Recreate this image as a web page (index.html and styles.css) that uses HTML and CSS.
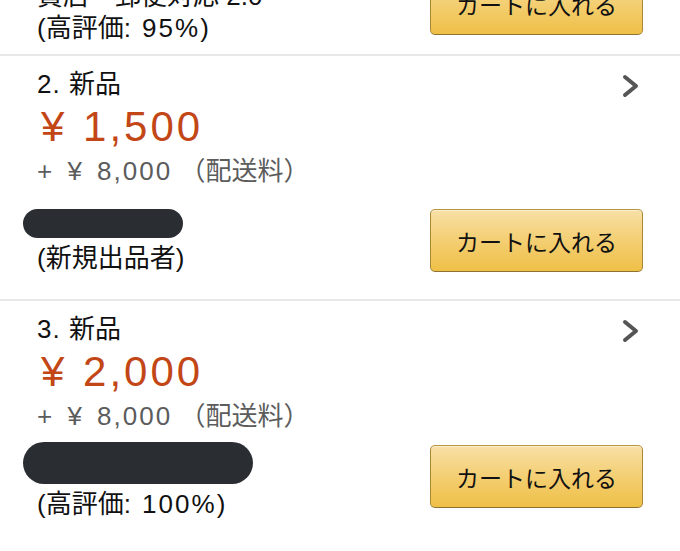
FILE: index.html
```html
<!DOCTYPE html>
<html lang="ja">
<head>
<meta charset="utf-8">
<title>出品一覧</title>
<link rel="stylesheet" href="styles.css">
</head>
<body>
<div class="list">
  <section class="offer offer-partial">
    <div class="seller">
      <div class="seller-line">貴店・郵便対応 2.0</div>
      <div class="seller-line">(高評価<span class="num">: 95%</span>)</div>
    </div>
    <button class="cart cart-partial" type="button">カートに入れる</button>
  </section>

  <section class="offer">
    <div class="offer-head">
      <div class="cond"><span class="idx">2. </span>新品</div>
      <svg class="chev" width="20" height="26" viewBox="0 0 20 26" aria-hidden="true"><path d="M4 4 L15 13 L4 22" fill="none" stroke="#555" stroke-width="4" stroke-linecap="round" stroke-linejoin="round"/></svg>
    </div>
    <div class="price"><span class="amt">¥ 1,500</span></div>
    <div class="ship"><span class="amt">+ ¥ 8,000</span> （配送料）</div>
    <div class="offer-foot foot-short">
      <div class="seller">
        <div class="redact redact-short"></div>
        <div class="seller-line">(新規出品者)</div>
      </div>
      <button class="cart" type="button">カートに入れる</button>
    </div>
  </section>

  <section class="offer">
    <div class="offer-head">
      <div class="cond"><span class="idx">3. </span>新品</div>
      <svg class="chev" width="20" height="26" viewBox="0 0 20 26" aria-hidden="true"><path d="M4 4 L15 13 L4 22" fill="none" stroke="#555" stroke-width="4" stroke-linecap="round" stroke-linejoin="round"/></svg>
    </div>
    <div class="price"><span class="amt">¥ 2,000</span></div>
    <div class="ship"><span class="amt">+ ¥ 8,000</span> （配送料）</div>
    <div class="offer-foot foot-tall">
      <div class="seller">
        <div class="redact redact-long"></div>
        <div class="seller-line">(高評価<span class="num">: 100%</span>)</div>
      </div>
      <button class="cart" type="button">カートに入れる</button>
    </div>
  </section>
</div>
</body>
</html>
```

FILE: styles.css
```css
html, body {
  margin: 0;
  padding: 0;
  background: #ffffff;
}

body {
  font-family: "Liberation Sans", "Noto Sans CJK JP", sans-serif;
  color: #111111;
  width: 680px;
  height: 551px;
  overflow: hidden;
}

.list {
  margin-top: -20px;
}

.offer {
  padding: 12px 37px 25px 37px;
  border-bottom: 2px solid #e8e8e8;
}

.offer:last-child {
  border-bottom: none;
}

.offer-partial {
  padding-top: 0;
  padding-bottom: 10px;
  display: flex;
  justify-content: space-between;
  align-items: flex-end;
}

.offer-head {
  display: flex;
  justify-content: space-between;
  align-items: flex-start;
}

.cond {
  font-size: 26px;
  line-height: 32px;
  color: #111111;
}

.idx {
  letter-spacing: 1px;
}

.chev {
  display: block;
  margin-top: 5px;
  margin-right: 2px;
}

.price {
  font-size: 42px;
  line-height: 54px;
  color: #c24616;
  padding-left: 4px;
}

.price .amt {
  letter-spacing: 3px;
  word-spacing: 1px;
}

.ship {
  font-size: 26px;
  line-height: 34px;
  color: #5c5c5c;
}

.ship .amt {
  letter-spacing: 2px;
  word-spacing: 4px;
}

.offer-foot {
  display: flex;
  justify-content: space-between;
  align-items: flex-start;
}

.foot-short {
  margin-top: 21px;
}

.foot-tall {
  margin-top: 9px;
}

.foot-tall .cart {
  margin-top: 3px;
}

.seller {
  display: flex;
  flex-direction: column;
}

.seller-line {
  font-size: 26px;
  line-height: 32px;
  color: #111111;
  white-space: nowrap;
}

.num {
  letter-spacing: 2px;
}

.redact {
  background: #2a2e33;
  border-radius: 999px;
  margin-left: -14px;
  margin-bottom: 4px;
}

.redact-short {
  width: 160px;
  height: 29px;
}

.redact-long {
  width: 230px;
  height: 42px;
}

.cart {
  width: 213px;
  height: 63px;
  padding: 0;
  font-family: "Liberation Sans", "Noto Sans CJK JP", sans-serif;
  font-size: 23px;
  color: #111111;
  background: linear-gradient(to bottom, #f8e0a6 0%, #f3cd6e 55%, #efc047 100%);
  border: 1px solid;
  border-color: #b8953f #a88734 #8e7230;
  border-radius: 5px;
  box-shadow: inset 0 1px 0 rgba(255, 255, 255, 0.45);
  flex: none;
}

.cart-partial {
  margin-top: -8px;
  margin-bottom: 9px;
}
```
